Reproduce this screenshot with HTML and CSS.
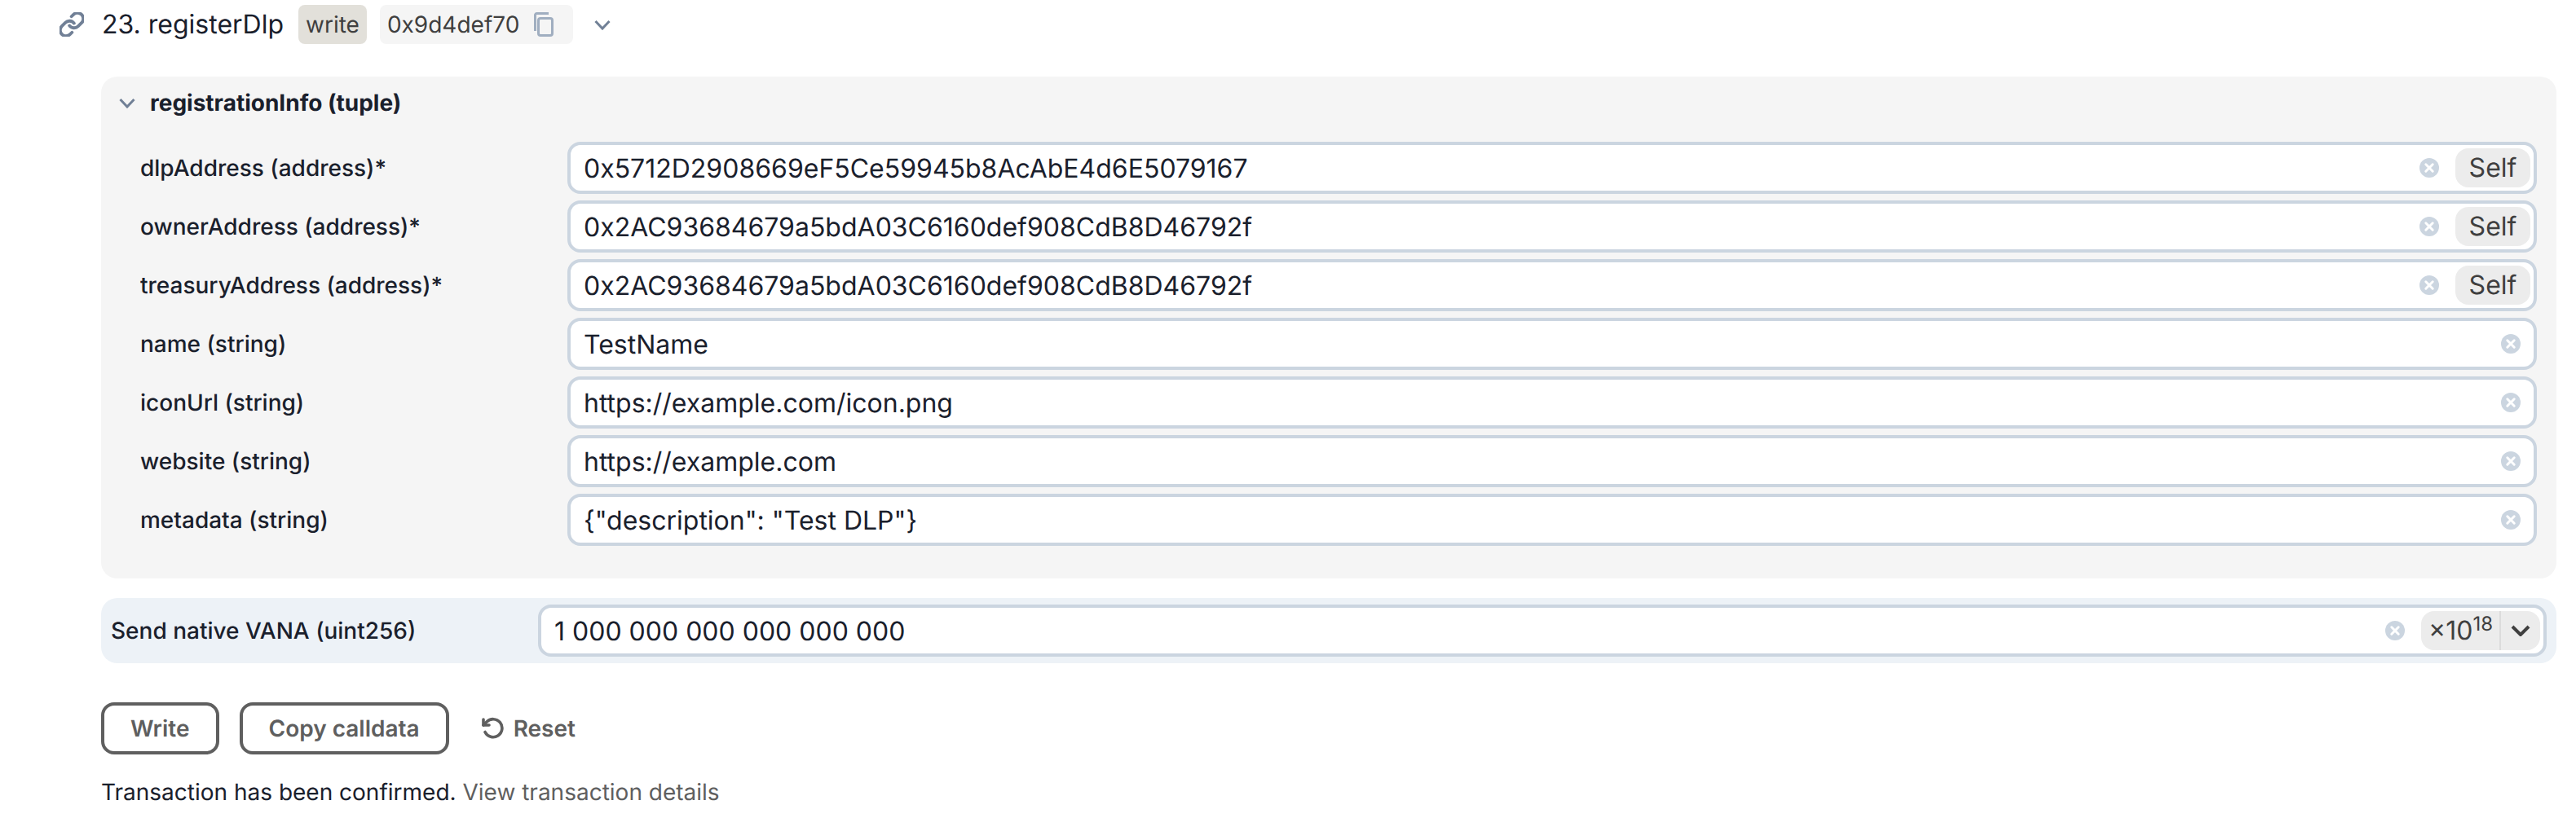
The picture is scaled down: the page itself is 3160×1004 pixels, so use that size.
FILE: index.html
```html
<!DOCTYPE html>
<html lang="en">
<head>
<meta charset="utf-8">
<title>registerDlp</title>
<link rel="stylesheet" href="styles.css">
</head>
<body>
<svg class="defs" width="0" height="0" aria-hidden="true">
  <symbol id="clear" viewBox="0 0 24 24">
    <circle cx="12" cy="12" r="12" fill="#cbd5e0"/>
    <path d="M7.800 7.800l8.400 8.400M16.200 7.800l-8.400 8.400" stroke="#fff" stroke-width="3" stroke-linecap="round" fill="none"/>
  </symbol>
</svg>
<main class="page">
  <header class="head">
    <svg class="ico-link" viewBox="1.500 1.500 21 21" fill="none" stroke="#718096" stroke-width="2.700" stroke-linecap="round" stroke-linejoin="round"><path d="M10 13a5 5 0 0 0 7.540.540l3-3a5 5 0 0 0-7.070-7.070l-1.720 1.710"/><path d="M14 11a5 5 0 0 0-7.540-.540l-3 3a5 5 0 0 0 7.070 7.070l1.710-1.710"/></svg>
    <span class="title">23. registerDlp</span>
    <span class="chip-write">write</span>
    <span class="chip-hash">0x9d4def70
      <svg class="ico-copy" viewBox="0 0 24 30" fill="none" stroke="#a0aec0" stroke-width="3"><path d="M1.500 23V3.500a2 2 0 0 1 2-2H18"/><rect x="5.500" y="7.500" width="17" height="21" rx="2.500"/></svg>
    </span>
    <svg class="ico-chev" viewBox="0 0 20 13" fill="none" stroke="#718096" stroke-width="3"><path d="M1.500 2l8.500 9 8.500-9"/></svg>
  </header>

  <section class="tuple">
    <div class="tuple-head">
      <svg class="ico-chev" viewBox="0 0 20 13" fill="none" stroke="#718096" stroke-width="3"><path d="M1.500 2l8.500 9 8.500-9"/></svg>
      <span class="tuple-title">registrationInfo (tuple)</span>
    </div>
    <div class="rows">
      <div class="row">
        <span class="label">dlpAddress (address)*</span>
        <div class="field"><span class="value">0x5712D2908669eF5Ce59945b8AcAbE4d6E5079167</span><svg class="ico-clear"><use href="#clear"/></svg><span class="self">Self</span></div>
      </div>
      <div class="row">
        <span class="label">ownerAddress (address)*</span>
        <div class="field"><span class="value">0x2AC93684679a5bdA03C6160def908CdB8D46792f</span><svg class="ico-clear"><use href="#clear"/></svg><span class="self">Self</span></div>
      </div>
      <div class="row">
        <span class="label">treasuryAddress (address)*</span>
        <div class="field"><span class="value">0x2AC93684679a5bdA03C6160def908CdB8D46792f</span><svg class="ico-clear"><use href="#clear"/></svg><span class="self">Self</span></div>
      </div>
      <div class="row">
        <span class="label">name (string)</span>
        <div class="field field-plain"><span class="value">TestName</span><svg class="ico-clear"><use href="#clear"/></svg></div>
      </div>
      <div class="row">
        <span class="label">iconUrl (string)</span>
        <div class="field field-plain"><span class="value">https://example.com/icon.png</span><svg class="ico-clear"><use href="#clear"/></svg></div>
      </div>
      <div class="row">
        <span class="label">website (string)</span>
        <div class="field field-plain"><span class="value">https://example.com</span><svg class="ico-clear"><use href="#clear"/></svg></div>
      </div>
      <div class="row">
        <span class="label">metadata (string)</span>
        <div class="field field-plain"><span class="value">{"description": "Test DLP"}</span><svg class="ico-clear"><use href="#clear"/></svg></div>
      </div>
    </div>
  </section>

  <section class="send">
    <span class="label">Send native VANA (uint256)</span>
    <div class="field"><span class="value">1 000 000 000 000 000 000</span><svg class="ico-clear"><use href="#clear"/></svg>
      <div class="mult"><span class="mult-val">×10<sup class="mult-sup">18</sup></span><span class="mult-arrow"><svg class="ico-down" viewBox="0 0 24 14" fill="none" stroke="#3f3f3f" stroke-width="4"><path d="M2 2l10 10 10-10"/></svg></span></div>
    </div>
  </section>

  <div class="actions">
    <span class="btn">Write</span>
    <span class="btn">Copy calldata</span>
    <span class="reset">
      <svg class="ico-reset" viewBox="0 0 28 28" fill="none" stroke="#5f5f5f" stroke-width="3.600" stroke-linecap="round" stroke-linejoin="round"><path d="M3 3v7h7"/><path d="M3 10l4-4a11 11 0 1 1-2 12.500"/></svg>
      Reset
    </span>
  </div>
  <p class="status">Transaction has been confirmed. <span class="status-link">View transaction details</span></p>
</main>
</body>
</html>
```
FILE: styles.css
```css
* { box-sizing: border-box; }
html, body { margin: 0; background: #fff; }
body { font-family: Inter, "Liberation Sans", sans-serif; color: #1a202c; height: 1004px; overflow: hidden; text-rendering: geometricPrecision; }
.defs { position: absolute; }
.page { padding: 6px 24px 0 124px; }

.head { display: flex; align-items: center; height: 48px; margin-left: -51px; }
.ico-link { width: 30px; height: 30px; margin-right: 22px; flex: none; }
.title { font-size: 32px; line-height: 48px; margin-right: 18px; }
.chip-write { height: 48px; line-height: 48px; padding: 0 9px; font-size: 28px; background: #e2e0da; color: #3f3f3f; border-radius: 8px; margin-right: 16px; }
.chip-hash { display: flex; align-items: center; height: 48px; padding: 0 24px 0 9px; font-size: 28px; background: #f5f5f5; color: #3f3f3f; border-radius: 8px; gap: 18px; margin-right: 26px; }
.ico-copy { width: 24px; height: 30px; flex: none; }
.ico-chev { width: 20px; height: 13px; flex: none; }

.tuple { margin-top: 40px; background: #f5f5f5; border-radius: 20px; height: 616px; }
.tuple-head { display: flex; align-items: center; height: 64px; padding-left: 22px; gap: 18px; }
.tuple-title { font-size: 28px; font-weight: 700; }
.rows { display: grid; row-gap: 8px; padding: 16px 24px 0 48px; }
.row { display: grid; grid-template-columns: 524px 1fr; align-items: center; }
.label { font-size: 28px; font-weight: 500; }

.field { display: flex; align-items: center; height: 64px; background: #fff; border: 4px solid #cbd5e0; border-radius: 16px; padding: 0 4px 0 16px; }
.value { flex: 1; font-size: 32px; color: #1a202c; white-space: nowrap; }
.ico-clear { width: 24px; height: 24px; flex: none; margin-right: 20px; }
.field-plain { padding-right: 16px; }
.field-plain .ico-clear { margin-right: 0; }
.self { width: 92px; height: 48px; line-height: 48px; text-align: center; font-size: 32px; background: #ececec; color: #3f3f3f; border-radius: 16px; }

.send { display: grid; grid-template-columns: 524px 1fr; align-items: center; height: 80px; margin-top: 24px; padding: 0 12px; background: #edf2f7; border-radius: 20px; }
.mult { display: flex; height: 48px; width: 146px; background: #ececec; border-radius: 16px; color: #3f3f3f; font-size: 32px; }
.mult-val { flex: 1; line-height: 48px; padding-left: 9px; border-right: 2px solid #dcdcdc; white-space: nowrap; }
.mult-sup { font-size: 24px; line-height: 0; vertical-align: 11px; }
.mult-arrow { display: flex; align-items: center; justify-content: center; width: 48px; }
.ico-down { width: 24px; height: 14px; }

.actions { display: flex; align-items: center; margin-top: 48px; height: 64px; }
.btn { height: 64px; line-height: 56px; padding: 0 32px; border: 4px solid #5f5f5f; border-radius: 16px; font-size: 28px; font-weight: 600; color: #5f5f5f; margin-right: 25px; }
.reset { display: flex; align-items: center; gap: 12px; margin-left: 14px; font-size: 28px; font-weight: 600; color: #5f5f5f; }
.ico-reset { width: 28px; height: 28px; }

.status { margin: 26px 0 0; font-size: 28px; line-height: 40px; }
.status-link { color: #5f5f5f; }
```
